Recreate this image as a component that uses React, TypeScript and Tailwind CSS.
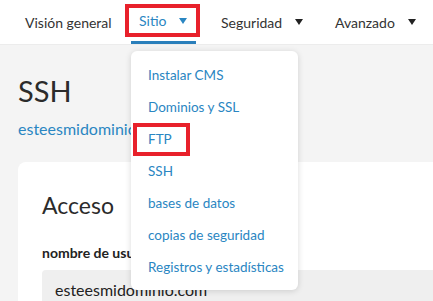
import { ReactNode } from "react";

const font = { fontFamily: '"Lato", "Open Sans", sans-serif' };

function Caret({ color }: { color: string }) {
  return (
    <svg width="8" height="6" viewBox="0 0 8 6" className="ml-[13px]">
      <path d="M0 0 L8 0 L4 6 Z" fill={color} />
    </svg>
  );
}

function NavItem({ children, caret }: { children: ReactNode; caret?: boolean }) {
  return (
    <div className="flex items-center text-[14px] text-[#333]">
      {children}
      {caret && <Caret color="#222" />}
    </div>
  );
}

const menu = [
  "Instalar CMS",
  "Dominios y SSL",
  "FTP",
  "SSH",
  "bases de datos",
  "copias de seguridad",
  "Registros y estadísticas",
];

export default function App() {
  return (
    <div
      className="relative w-[433px] h-[301px] overflow-hidden bg-[#f4f4f4]"
      style={font}
    >
      {/* barra de navegación */}
      <nav className="h-[45px] bg-white flex items-center border-b border-[#ececec]">
        <div className="pl-[25px] w-[125px]">
          <NavItem>Visión general</NavItem>
        </div>
        <div className="relative h-full w-[75px]">
          <div className="absolute left-0 top-[4px] w-[75px] h-[33px] border-[4px] border-[#e8212b] flex items-center pl-[10px]">
            <span className="text-[14px] text-[#2a86c2]">Sitio</span>
            <Caret color="#2a86c2" />
          </div>
          <div className="absolute left-[6px] bottom-0 w-[65px] h-[3px] bg-[#2a7fbb]" />
        </div>
        <div className="pl-[21px] w-[135px]">
          <NavItem caret>Seguridad</NavItem>
        </div>
        <NavItem caret>Avanzado</NavItem>
      </nav>

      {/* contenido */}
      <main className="px-[18px] pt-[28px]">
        <h1 className="text-[29px] leading-[36px] text-[#2b2b2b]">SSH</h1>
        <a className="block mt-[8px] text-[16px] text-[#2a86c2]">esteesmidominio.com</a>
        <section className="mt-[21px] w-[460px] bg-white rounded-[8px] pl-[24px] pt-[29px] pb-[30px]">
          <h2 className="text-[23px] leading-[28px] text-[#2b2b2b]">Acceso</h2>
          <p className="mt-[23px] text-[14px] font-bold text-[#222]">nombre de usuario</p>
          <div className="mt-[7px] h-[40px] bg-[#efefef] rounded-[4px] flex items-center pl-[13px] text-[16px] text-[#222]">
            esteesmidominio.com
          </div>
        </section>
      </main>

      {/* menú desplegable */}
      <div className="absolute left-[131px] top-[51px] w-[167px] h-[239px] bg-white rounded-[6px] shadow-[0_1px_6px_rgba(0,0,0,0.15)] pt-[8px]">
        {menu.map((item) => (
          <div key={item} className="relative h-[32px] flex items-center pl-[17px] text-[13.5px] text-[#2a86c2]">
            {item === "FTP" && (
              <div className="absolute left-[2px] top-[0px] w-[57px] h-[33px] border-[4px] border-[#e8212b]" />
            )}
            <span className="relative">{item}</span>
          </div>
        ))}
      </div>
    </div>
  );
}
